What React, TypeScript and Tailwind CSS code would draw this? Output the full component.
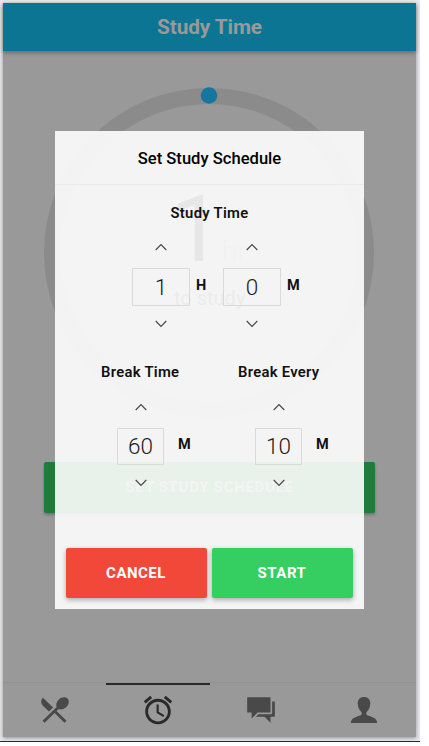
import type { ReactNode } from "react";
import { IoMdRestaurant, IoMdAlarm, IoMdChatboxes } from "react-icons/io";

function Chevron({ down = false }: { down?: boolean }) {
  return (
    <svg width="12" height="8" viewBox="0 0 12 8" fill="none" stroke="#444" strokeWidth="1.1" className="block">
      <path d={down ? "M.7 1 6 6.5 11.3 1" : "M.7 7 6 1.5 11.3 7"} />
    </svg>
  );
}

function Stepper({ value, unit, wide = false }: { value: string; unit: string; wide?: boolean }) {
  return (
    <div className={wide ? "flex w-[91px] shrink-0 flex-col" : "flex w-[138px] shrink-0 flex-col"}>
      <div className={wide ? "flex w-[58px] justify-center" : "flex w-[47px] justify-center"}>
        <Chevron />
      </div>
      <div className="mt-[17px] flex">
        <div
          className={
            wide
              ? "flex h-[38px] w-[58px] items-center justify-center border border-[#dadada] pt-px text-[22.500px] font-[360] text-[#1a1a1a]"
              : "flex h-[37px] w-[47px] items-center justify-center border border-[#dadada] pt-px text-[22.500px] font-[360] text-[#1a1a1a]"
          }
        >
          {value}
        </div>
        <span className={wide ? "ml-[6px] pt-[9px] text-[14.500px] leading-[18px] font-bold" : "ml-[14px] pt-[8px] text-[14.500px] leading-[18px] font-bold"}>
          {unit}
        </span>
      </div>
      <div className={wide ? "mt-[14px] flex w-[58px] justify-center" : "mt-[14px] flex w-[47px] justify-center"}>
        <Chevron down />
      </div>
    </div>
  );
}

function Tab({ children, active = false }: { children: ReactNode; active?: boolean }) {
  return (
    <div
      className={
        active
          ? "flex flex-1 items-center justify-center border-t-2 border-[#292929] pb-[3px] text-[#292929]"
          : "flex flex-1 items-center justify-center border-t-2 border-transparent pb-[3px] text-[#494949]"
      }
    >
      {children}
    </div>
  );
}

function Timer() {
  return (
    <svg width="413" height="340" viewBox="3 82 413 340" className="block shrink-0 font-['Roboto',sans-serif]">
      <circle cx="209" cy="253" r="157" fill="none" stroke="#8b8b8b" strokeWidth="16" />
      <circle cx="209" cy="95.5" r="8.3" fill="#1576a0" />
      <text x="170" y="261" fontSize="93" fill="#191919">1</text>
      <text x="222" y="261" fontSize="28" fontWeight="300" fill="#7c7c7c">hr</text>
      <text x="174" y="305" fontSize="20" fill="#434343">to study</text>
    </svg>
  );
}

export default function App() {
  return (
    <div className="h-[746px] w-[429px] overflow-hidden bg-white font-['Roboto',sans-serif] text-[#111]">
      <div className="h-[742px] w-[420px] border-b border-[#063b42] bg-[#e8e9ed] pt-[3px] pl-[3px]">
        <div className="relative flex h-[734px] w-[413px] flex-col bg-[#999] shadow-[0_1px_4px_rgba(0,0,0,0.4)]">
          <header className="flex h-[48px] shrink-0 items-center justify-center bg-[#0b7593] pt-px text-[20.800px] font-bold tracking-[-0.1px] text-[#999] shadow-[0_2px_4px_rgba(0,0,0,0.3)]">
            Study Time
          </header>
          <main className="flex flex-1 flex-col pt-[31px]">
            <Timer />
            <button className="mx-[41px] mt-[40px] h-[51px] rounded-[2px] bg-[#1f7d3a] text-[15px] font-bold tracking-[0.7px] text-[#999] shadow-[0_2px_3px_rgba(0,0,0,0.25)]">
              SET STUDY SCHEDULE
            </button>
          </main>
          <nav className="flex h-[54px] shrink-0 shadow-[0_-1px_0_#929292]">
            <Tab><IoMdRestaurant size={34} /></Tab>
            <Tab active><IoMdAlarm size={34} /></Tab>
            <Tab><IoMdChatboxes size={34} /></Tab>
            <Tab>
              <svg width="28" height="26" viewBox="0 0 28 26" fill="currentColor">
                <path d="M14 0c-4 0-6.300 2.700-6.300 6.500 0 3.500 1.500 6.400 3.500 8.300.8.900.8 2.800-.4 3.400C7.200 19.800.8 20.500.8 26h26.400c0-5.500-6.400-6.200-10-7.800-1.200-.6-1.200-2.500-.4-3.400 2-1.900 3.500-4.800 3.500-8.300C20.300 2.700 18 0 14 0Z" />
              </svg>
            </Tab>
          </nav>
          <section className="absolute top-[128px] left-[52px] flex h-[478px] w-[309px] flex-col bg-[#fefefe]/90">
            <h2 className="flex h-[54px] shrink-0 items-center justify-center border-b border-[#e9e9e9] pt-[3px] text-[16.600px] font-[460] text-black">
              Set Study Schedule
            </h2>
            <h3 className="mt-[18px] text-center text-[14.800px] leading-5 font-semibold tracking-[0.3px]">Study Time</h3>
            <div className="mt-[20px] flex pl-[77px]">
              <Stepper value="1" unit="H" wide />
              <Stepper value="0" unit="M" wide />
            </div>
            <div className="mt-[34px] flex text-[14.800px] leading-5 font-semibold tracking-[0.3px]">
              <h3 className="ml-[46px] w-[137px]">Break Time</h3>
              <h3>Break Every</h3>
            </div>
            <div className="mt-[21px] flex pl-[62px]">
              <Stepper value="60" unit="M" />
              <Stepper value="10" unit="M" />
            </div>
            <div className="mt-auto mb-[11px] flex gap-[5px] px-[11px] text-[15px] font-bold tracking-[0.5px] text-white">
              <button className="h-[50px] w-[141px] rounded-[2px] bg-[#f24839] pr-px shadow-[0_2px_5px_rgba(0,0,0,0.3)]">CANCEL</button>
              <button className="h-[50px] w-[141px] rounded-[2px] bg-[#34ce61] pr-px shadow-[0_2px_5px_rgba(0,0,0,0.3)]">START</button>
            </div>
          </section>
        </div>
      </div>
    </div>
  );
}
